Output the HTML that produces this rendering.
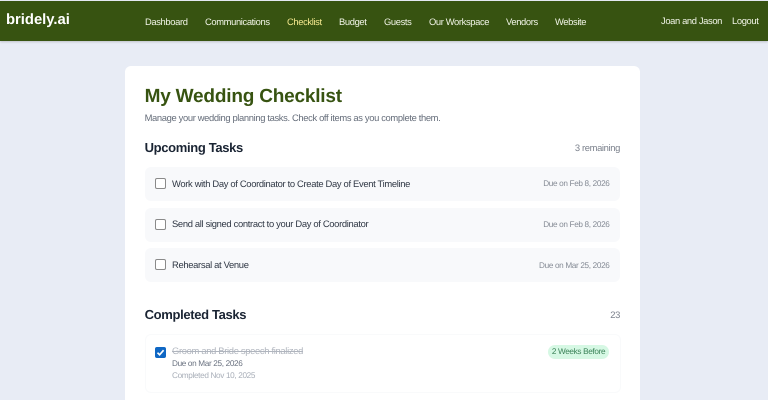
<!DOCTYPE html>
<html>
<head>
<meta charset="utf-8">
<style>
html,body{margin:0;padding:0;width:768px;height:400px;overflow:hidden;background:#e8ecf5;font-family:"Liberation Sans",Arial,sans-serif;}
#wrap{position:relative;width:768px;height:400px;overflow:hidden;background:#e8ecf5;text-rendering:geometricPrecision;filter:blur(.3px);}
.a{position:absolute;white-space:nowrap;line-height:1;}
#nav{position:absolute;left:0;top:1px;width:768px;height:40px;background:#375311;box-shadow:0 1px 2px rgba(0,0,0,.18);}
.n{font-size:9.4px;letter-spacing:-.37px;color:#f2f5e8;top:16.5px;}
#card{position:absolute;left:125px;top:66px;width:515px;height:334px;background:#fff;border-radius:6px 6px 0 0;}
.row{position:absolute;left:145px;width:475px;height:34px;background:#f8f9fb;border-radius:6px;}
.cb{position:absolute;left:155px;width:9px;height:9px;border:1px solid #8a8a8a;border-radius:2px;background:#fff;}
.t{font-size:9.4px;letter-spacing:-.32px;color:#2f3744;left:172px;}
.d{font-size:8.2px;letter-spacing:-.34px;color:#858b95;right:158.5px;}
.h{font-size:13px;letter-spacing:-.34px;font-weight:bold;color:#1a2433;left:144.6px;}
</style>
</head>
<body>
<div id="wrap">
<div id="nav"></div>
<div class="a" style="left:6px;top:13.4px;font-size:14.8px;font-weight:bold;color:#fff;">bridely.ai</div>
<div class="a n" style="left:145px;">Dashboard</div>
<div class="a n" style="left:205px;">Communications</div>
<div class="a n" style="left:287px;color:#f5e98f;">Checklist</div>
<div class="a n" style="left:339px;">Budget</div>
<div class="a n" style="left:384px;">Guests</div>
<div class="a n" style="left:429px;">Our Workspace</div>
<div class="a n" style="left:506px;">Vendors</div>
<div class="a n" style="left:555px;">Website</div>
<div class="a n" style="left:661px;top:16.1px;">Joan and Jason</div>
<div class="a n" style="left:732px;top:16.1px;">Logout</div>

<div id="card"></div>
<div class="a" style="left:144.6px;top:87.3px;font-size:19px;letter-spacing:-.2px;font-weight:bold;color:#375311;">My Wedding Checklist</div>
<div class="a" style="left:144.6px;top:113.3px;font-size:9.4px;letter-spacing:-.35px;color:#656d7a;">Manage your wedding planning tasks. Check off items as you complete them.</div>

<div class="a h" style="top:141.3px;">Upcoming Tasks</div>
<div class="a" style="right:148px;top:143.3px;font-size:9.4px;letter-spacing:-.35px;color:#7b818c;">3 remaining</div>

<div class="row" style="top:167px;"></div>
<div class="cb" style="top:178px;"></div>
<div class="a t" style="top:178.6px;">Work with Day of Coordinator to Create Day of Event Timeline</div>
<div class="a d" style="top:180.4px;">Due on Feb 8, 2026</div>

<div class="row" style="top:208px;"></div>
<div class="cb" style="top:218.5px;"></div>
<div class="a t" style="top:219.3px;">Send all signed contract to your Day of Coordinator</div>
<div class="a d" style="top:221.4px;">Due on Feb 8, 2026</div>

<div class="row" style="top:248px;"></div>
<div class="cb" style="top:259px;"></div>
<div class="a t" style="top:260.3px;">Rehearsal at Venue</div>
<div class="a d" style="top:261.9px;">Due on Mar 25, 2026</div>

<div class="a h" style="top:308.3px;">Completed Tasks</div>
<div class="a" style="right:148px;top:310.3px;font-size:9.4px;letter-spacing:-.35px;color:#7b818c;">23</div>

<div style="position:absolute;left:145px;top:334px;width:474px;height:57px;border:1px solid #f9fafb;border-radius:6px;background:#fff;"></div>
<svg style="position:absolute;left:155px;top:347px;" width="11" height="11" viewBox="0 0 11 11"><rect width="11" height="11" rx="2" fill="#0f67c4"/><path d="M2.5 5.7L4.6 7.8L8.6 3.2" fill="none" stroke="#fff" stroke-width="1.7"/></svg>
<div class="a" style="left:172px;top:346.3px;font-size:9.4px;letter-spacing:-.32px;color:#b0b5be;text-decoration:line-through;">Groom and Bride speech finalized</div>
<div class="a" style="left:172px;top:359.9px;font-size:8.2px;letter-spacing:-.34px;color:#6a7280;">Due on Mar 25, 2026</div>
<div class="a" style="left:172px;top:371.9px;font-size:8.2px;letter-spacing:-.34px;color:#a9afb9;">Completed Nov 10, 2025</div>
<div class="a" style="left:548px;top:345px;width:61px;height:14px;line-height:14px;border-radius:7px;background:#d6f8e4;color:#3b8258;font-size:8.2px;letter-spacing:-.34px;text-align:center;">2 Weeks Before</div>
</div>
</body>
</html>
